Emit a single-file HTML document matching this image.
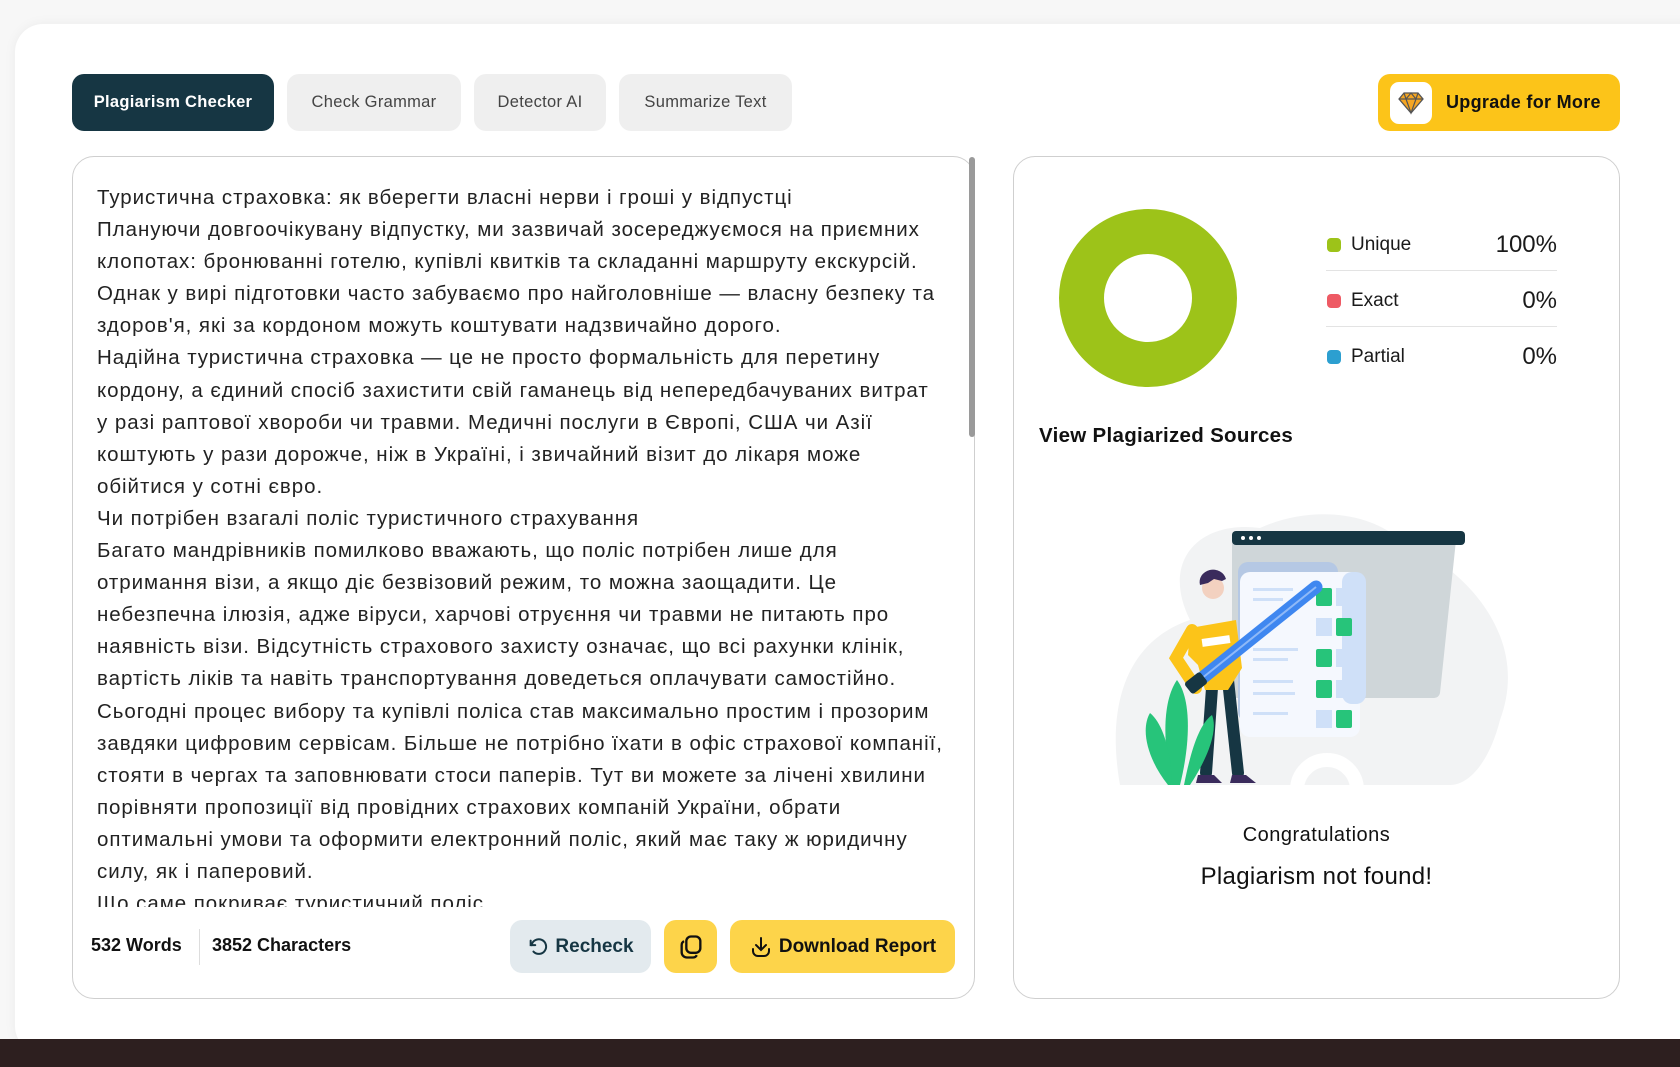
<!DOCTYPE html>
<html><head><meta charset="utf-8"><style>
*{box-sizing:border-box;margin:0;padding:0}
body{width:1680px;height:1067px;background:#f7f7f7;font-family:"Liberation Sans",sans-serif;position:relative;overflow:hidden;color:#1a1a1a}
.card{position:absolute;left:15px;top:24px;width:1700px;height:1030px;background:#fff;border-radius:28px;box-shadow:0 0 12px rgba(0,0,0,.05)}
.tab{position:absolute;top:74px;height:57px;border-radius:12px;background:#efefef;color:#444;font-size:16.5px;display:flex;align-items:center;justify-content:center;font-weight:bold;letter-spacing:0.3px}
.panel{position:absolute;top:156px;height:843px;border:1px solid #cfcfcf;border-radius:22px;background:#fff}
.txt{position:absolute;left:97px;top:182px;font-size:20.5px;line-height:32.1px;color:#222;white-space:nowrap;letter-spacing:0.95px}
.btn{position:absolute;top:920px;height:53px;border-radius:12px;display:flex;align-items:center;justify-content:center;font-size:19px;font-weight:bold;gap:6px}
.leg{position:absolute;left:1326px;width:231px;height:52px;display:flex;align-items:center;font-size:19px}
.leg .d{width:14px;height:14px;border-radius:4px;margin-left:1px;margin-right:10px}
.leg b{margin-left:auto;font-size:24px;font-weight:normal}
</style></head><body>
<div class="card"></div>
<div class="tab" style="left:72px;width:202px;background:#163643;color:#fff">Plagiarism Checker</div>
<div class="tab" style="left:287px;width:174px;font-weight:normal">Check Grammar</div>
<div class="tab" style="left:474px;width:132px;font-weight:normal">Detector AI</div>
<div class="tab" style="left:619px;width:173px;font-weight:normal">Summarize Text</div>
<div class="tab" style="left:1378px;width:242px;background:#fcc419;color:#111;font-size:18px;justify-content:flex-start;padding-left:12px">
<span style="width:42px;height:42px;background:#fff;border-radius:9px;display:flex;align-items:center;justify-content:center;margin-right:14px"><svg width="28" height="24" viewBox="0 0 28 24"><path d="M2 8 L7 2 H21 L26 8 L14 22Z" fill="#f5a623" stroke="#555" stroke-width="1.3"/><path d="M2 8H26M9 8L14 22L19 8M7 2L9 8L14 2L19 8L21 2" fill="none" stroke="#555" stroke-width="1.2"/></svg></span>Upgrade for More</div>

<div class="panel" style="left:72px;width:903px"></div>
<div style="position:absolute;left:969px;top:157px;width:6px;height:280px;background:#9a9a9a;border-radius:3px"></div>
<div style="position:absolute;left:80px;top:162px;width:885px;height:745px;overflow:hidden">
<div class="txt" style="left:17px;top:20px">Туристична страховка: як вберегти власні нерви і гроші у відпустці<br>Плануючи довгоочікувану відпустку, ми зазвичай зосереджуємося на приємних<br>клопотах: бронюванні готелю, купівлі квитків та складанні маршруту екскурсій.<br>Однак у вирі підготовки часто забуваємо про найголовніше — власну безпеку та<br>здоров'я, які за кордоном можуть коштувати надзвичайно дорого.<br>Надійна туристична страховка — це не просто формальність для перетину<br>кордону, а єдиний спосіб захистити свій гаманець від непередбачуваних витрат<br>у разі раптової хвороби чи травми. Медичні послуги в Європі, США чи Азії<br>коштують у рази дорожче, ніж в Україні, і звичайний візит до лікаря може<br>обійтися у сотні євро.<br>Чи потрібен взагалі поліс туристичного страхування<br>Багато мандрівників помилково вважають, що поліс потрібен лише для<br>отримання візи, а якщо діє безвізовий режим, то можна заощадити. Це<br>небезпечна ілюзія, адже віруси, харчові отруєння чи травми не питають про<br>наявність візи. Відсутність страхового захисту означає, що всі рахунки клінік,<br>вартість ліків та навіть транспортування доведеться оплачувати самостійно.<br>Сьогодні процес вибору та купівлі поліса став максимально простим і прозорим<br>завдяки цифровим сервісам. Більше не потрібно їхати в офіс страхової компанії,<br>стояти в чергах та заповнювати стоси паперів. Тут ви можете за лічені хвилини<br>порівняти пропозиції від провідних страхових компаній України, обрати<br>оптимальні умови та оформити електронний поліс, який має таку ж юридичну<br>силу, як і паперовий.<br>Що саме покриває туристичний поліс</div>
</div>
<div style="position:absolute;left:91px;top:935px;font-size:18px;font-weight:bold;color:#111">532 Words</div>
<div style="position:absolute;left:199px;top:929px;width:1px;height:36px;background:#ddd"></div>
<div style="position:absolute;left:212px;top:935px;font-size:18px;font-weight:bold;color:#111">3852 Characters</div>
<div class="btn" style="left:510px;width:141px;background:#e3eaee;color:#163643"><svg width="22" height="22" viewBox="0 0 24 24" fill="none" stroke="#163643" stroke-width="2.2" stroke-linecap="round"><path d="M4 5v5h5"/><path d="M5 10a8 8 0 1 1 2 7"/></svg>Recheck</div>
<div class="btn" style="left:664px;width:53px;background:#fdd44a"><svg width="28" height="28" viewBox="0 0 24 24" fill="none" stroke="#111" stroke-width="2"><rect x="8" y="3" width="12" height="14" rx="4"/><path d="M6 7a4 4 0 0 0-2 3.5v6A4.5 4.5 0 0 0 8.5 21h5a4 4 0 0 0 3.5-2"/></svg></div>
<div class="btn" style="left:730px;width:225px;background:#fdd44a;color:#111"><svg width="24" height="24" viewBox="0 0 24 24" fill="none" stroke="#111" stroke-width="2" stroke-linecap="round"><path d="M12 3v12M7 10l5 5 5-5M4 14v2a5 5 0 0 0 5 5h6a5 5 0 0 0 5-5v-2"/></svg>Download Report</div>

<div class="panel" style="left:1013px;width:607px"></div>
<svg style="position:absolute;left:1059px;top:209px" width="178" height="178"><circle cx="89" cy="89" r="66.5" fill="none" stroke="#9dc319" stroke-width="45"/></svg>
<div class="leg" style="top:219px;border-bottom:1px solid #e3e3e3"><span class="d" style="background:#9dc319"></span>Unique<b>100%</b></div>
<div class="leg" style="top:275px;border-bottom:1px solid #e3e3e3"><span class="d" style="background:#ee5a64"></span>Exact<b>0%</b></div>
<div class="leg" style="top:331px"><span class="d" style="background:#2c9fd0"></span>Partial<b>0%</b></div>
<div style="position:absolute;left:1039px;top:424px;font-size:20.5px;font-weight:bold;color:#111;letter-spacing:0.3px">View Plagiarized Sources</div>

<svg style="position:absolute;left:1100px;top:505px" width="430" height="285" viewBox="1100 505 430 285">
<path d="M1120 785 C1105 700 1130 640 1190 620 C1160 560 1200 520 1260 528 C1310 505 1370 512 1400 540 C1470 570 1530 640 1500 720 C1490 760 1470 785 1450 785Z" fill="#f2f3f4"/>
<circle cx="1327" cy="790" r="30" fill="none" stroke="#fff" stroke-width="14"/>
<path d="M1232 540 H1456 L1440 693 a6 6 0 0 1-6 5H1232Z" fill="#cfd6d9"/>
<rect x="1232" y="531" width="233" height="14" rx="4" fill="#163643"/>
<circle cx="1243" cy="538" r="2" fill="#fff"/><circle cx="1251" cy="538" r="2" fill="#fff"/><circle cx="1259" cy="538" r="2" fill="#fff"/>
<rect x="1238" y="562" width="100" height="160" rx="10" fill="#b5c8e4"/>
<rect x="1240" y="572" width="120" height="165" rx="10" fill="#f5f8fe"/>
<rect x="1342" y="572" width="24" height="132" rx="10" fill="#cfe0f8"/>
<g fill="#cfe0f8"><rect x="1253" y="588" width="40" height="3"/><rect x="1253" y="598" width="30" height="3"/><rect x="1253" y="648" width="45" height="3"/><rect x="1253" y="658" width="35" height="3"/><rect x="1253" y="680" width="40" height="3"/><rect x="1253" y="692" width="42" height="3"/><rect x="1253" y="712" width="35" height="3"/>
<rect x="1336" y="588" width="16" height="18"/><rect x="1316" y="618" width="16" height="18"/><rect x="1336" y="649" width="16" height="18"/><rect x="1336" y="680" width="16" height="18"/><rect x="1316" y="710" width="16" height="18"/></g>
<g fill="#27c47a"><rect x="1316" y="588" width="16" height="18" rx="2"/><rect x="1336" y="618" width="16" height="18" rx="2"/><rect x="1316" y="649" width="16" height="18" rx="2"/><rect x="1316" y="680" width="16" height="18" rx="2"/><rect x="1336" y="710" width="16" height="18" rx="2"/></g>
<g stroke-linecap="round" fill="none">
<path d="M1212 688 L1206 773" stroke="#163643" stroke-width="12"/>
<path d="M1228 680 L1238 773" stroke="#163643" stroke-width="12"/>
</g>
<path d="M1198 775 h16 l8 8 h-26z M1232 775 h14 l10 8 h-26z" fill="#3a2b5c"/>
<path d="M1190 628 L1236 620 L1242 668 L1228 690 L1205 690 L1198 665 L1188 655Z" fill="#fcc419"/>
<path d="M1192 630 L1176 658 L1196 688" stroke="#fcc419" stroke-width="12" fill="none" stroke-linecap="round"/>
<rect x="1202" y="637" width="28" height="8" fill="#fff" transform="rotate(-8 1216 641)"/>
<circle cx="1213" cy="588" r="11" fill="#f3d1c0"/><path d="M1200 585 a13 12 0 0 1 26 -6 l-4 2 -8 -2 -6 4z" fill="#3a2b5c"/>
<path d="M1196 683 L1316 587" stroke="#3f87f0" stroke-width="13" stroke-linecap="round"/>
<path d="M1196 683 L1316 587" stroke="#8fb9f7" stroke-width="2"/>
<rect x="1186" y="676" width="20" height="14" rx="3" fill="#163643" transform="rotate(-38 1196 683)"/>
<path d="M1172 785 C1162 740 1163 700 1177 680 C1192 700 1190 745 1180 785Z" fill="#27c47a"/>
<path d="M1168 785 C1148 760 1140 730 1150 713 C1165 725 1172 760 1172 785Z" fill="#27c47a"/>
<path d="M1184 785 C1190 755 1198 725 1212 715 C1220 735 1200 770 1190 785Z" fill="#27c47a"/>
</svg>

<div style="position:absolute;left:1013px;width:607px;top:824px;text-align:center;font-size:20px;color:#111;letter-spacing:0.5px">Congratulations</div>
<div style="position:absolute;left:1013px;width:607px;top:863px;text-align:center;font-size:24px;color:#111;letter-spacing:0.3px">Plagiarism not found!</div>
<div style="position:absolute;left:0;top:1039px;width:1680px;height:28px;background:#2d1f1f"></div>
</body></html>
